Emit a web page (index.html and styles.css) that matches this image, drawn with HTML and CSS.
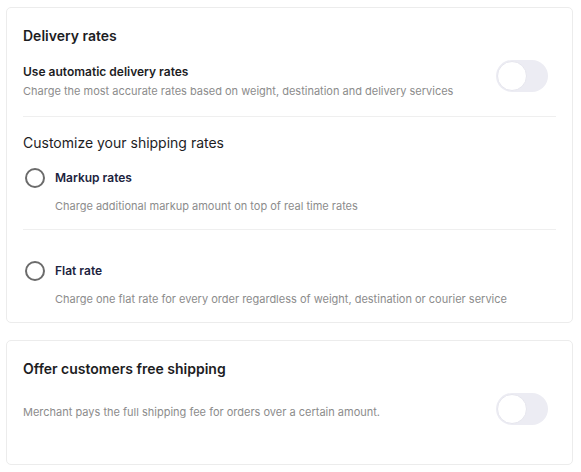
FILE: index.html
```html
<!DOCTYPE html>
<html>
<head>
<meta charset="utf-8">
<link rel="stylesheet" href="styles.css">
</head>
<body>
<div class="page">
  <section class="card card-rates">
    <h2 class="card-title">Delivery rates</h2>
    <div class="auto-row">
      <div class="auto-text">
        <div class="label">Use automatic delivery rates</div>
        <div class="desc">Charge the most accurate rates based on weight, destination and delivery services</div>
      </div>
      <div class="toggle"><span class="knob"></span></div>
    </div>
    <h3 class="sub-title">Customize your shipping rates</h3>
    <div class="option option-first">
      <div class="option-head">
        <span class="radio"></span>
        <span class="option-label">Markup rates</span>
      </div>
      <div class="option-desc">Charge additional markup amount on top of real time rates</div>
    </div>
    <div class="option option-last">
      <div class="option-head">
        <span class="radio"></span>
        <span class="option-label">Flat rate</span>
      </div>
      <div class="option-desc">Charge one flat rate for every order regardless of weight, destination or courier service</div>
    </div>
  </section>
  <section class="card card-free">
    <h2 class="card-title">Offer customers free shipping</h2>
    <div class="free-row">
      <div class="desc">Merchant pays the full shipping fee for orders over a certain amount.</div>
      <div class="toggle"><span class="knob"></span></div>
    </div>
  </section>
</div>
</body>
</html>
```
FILE: styles.css
```css
* { box-sizing: border-box; }
html, body { margin: 0; padding: 0; background: #fff; }
body {
  font-family: Inter, "Noto Sans", "Liberation Sans", sans-serif;
  color: #1f1f1f;
}
.page {
  padding: 7px 8px 7px 6px;
  display: flex;
  flex-direction: column;
  gap: 17px;
}
.card {
  border: 1px solid #ececec;
  border-radius: 5px;
  padding: 16px 16px 14px 16px;
}
.card-title {
  margin: 0;
  font-size: 14px;
  line-height: 24px;
  font-weight: 600;
  color: #1d1d1f;
}
.auto-row {
  margin-top: 12px;
  display: flex;
  align-items: flex-start;
  justify-content: space-between;
  border-bottom: 1px solid #efefef;
  padding-bottom: 16px;
}
.auto-text { padding-top: 3px; }
.label {
  font-size: 12px;
  line-height: 18px;
  font-weight: 600;
  color: #1d1d1f;
}
.desc {
  font-size: 11px;
  line-height: 18px;
  color: #8c8c8c;
  margin-top: 1px;
}
.toggle {
  width: 52px;
  height: 32px;
  border-radius: 16px;
  background: #ececf3;
  margin-right: 8px;
  flex: none;
  padding: 1px;
}
.knob {
  display: block;
  width: 30px;
  height: 30px;
  border-radius: 50%;
  background: #fff;
  border: 1px solid #e6e6ee;
}
.sub-title {
  margin: 14px 0 0 0;
  font-size: 14px;
  line-height: 24px;
  font-weight: 400;
  color: #1d1d1f;
}
.option-first {
  margin-top: 13px;
  padding-bottom: 14px;
  border-bottom: 1px solid #efefef;
}
.option-last { margin-top: 31px; }
.option-head {
  display: flex;
  align-items: center;
  gap: 10px;
  height: 20px;
  margin-left: 2px;
}
.radio {
  width: 20px;
  height: 20px;
  border-radius: 50%;
  border: 2px solid #6b6b6b;
  flex: none;
}
.option-label {
  font-size: 12px;
  font-weight: 600;
  color: #1c2340;
  line-height: 20px;
}
.option-desc {
  margin-top: 9px;
  margin-left: 32px;
  font-size: 11px;
  line-height: 18px;
  color: #8c8c8c;
}
.card-free { padding-bottom: 39px; }
.free-row {
  margin-top: 12px;
  display: flex;
  align-items: center;
  justify-content: space-between;
}
.free-row .desc { margin-top: 6px; }
```
